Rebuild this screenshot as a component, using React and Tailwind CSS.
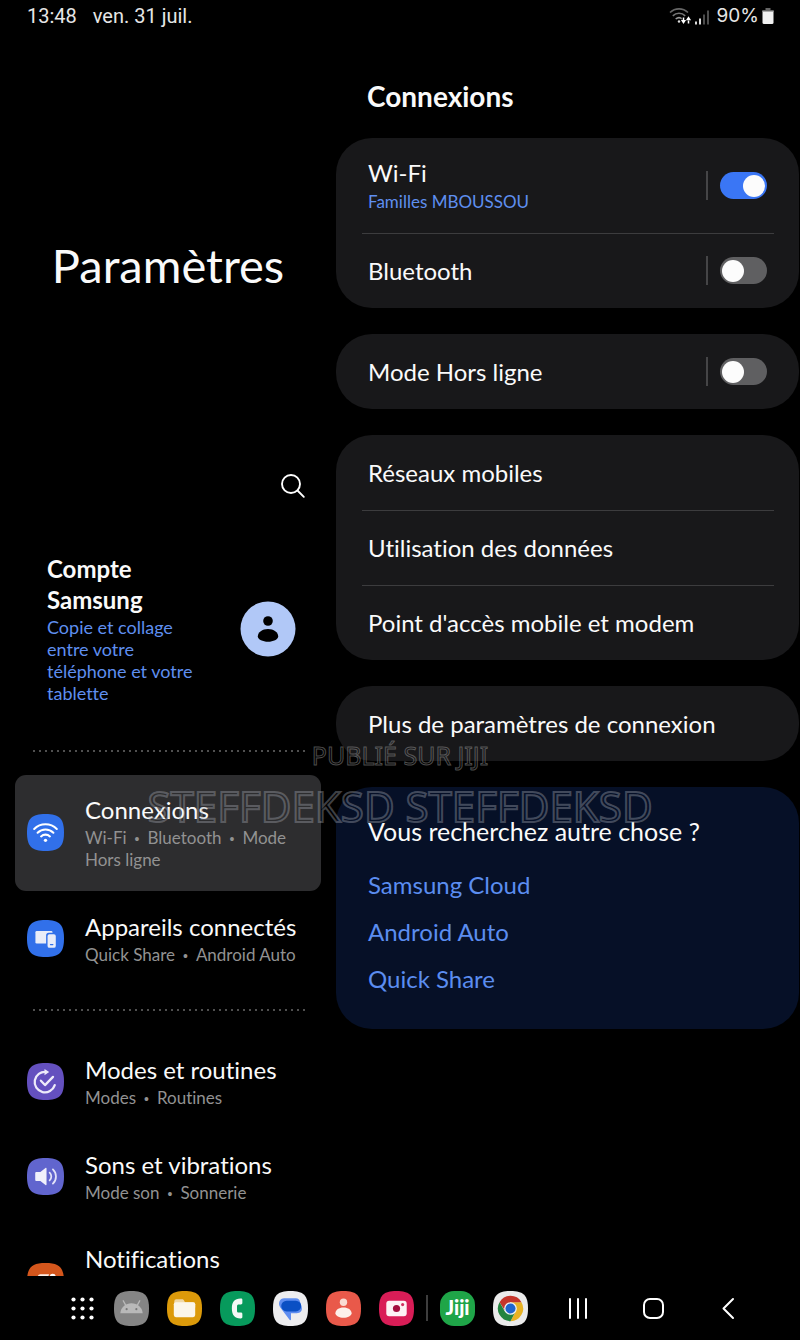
import React from "react";

const SQUIRCLE = "M18 0C31.5 0 36 4.5 36 18S31.5 36 18 36 0 31.5 0 18 4.5 0 18 0Z";

function Tile({ color, className, children }) {
  return (
    <svg viewBox="0 0 36 36" className={`shrink-0 ${className}`} aria-hidden="true">
      <path d={SQUIRCLE} fill={color} />
      {children}
    </svg>
  );
}

const tileSize = "size-[37px]";

const WifiTile = () => (
  <Tile color="#3170ea" className={tileSize}>
    <g fill="none" stroke="#fff" strokeWidth="2" strokeLinecap="round">
      <path d="M7 14.6a15.6 15.6 0 0 1 22 0" />
      <path d="M10.3 18.2a11 11 0 0 1 15.4 0" />
      <path d="M13.7 21.8a6.2 6.2 0 0 1 8.6 0" />
    </g>
    <circle cx="18" cy="25.6" r="1.6" fill="#fff" />
  </Tile>
);

const DevicesTile = () => (
  <Tile color="#3170ea" className={tileSize}>
    <rect x="8.2" y="10.6" width="16.6" height="12.2" rx="1.2" fill="#e9edf8" />
    <rect x="18.6" y="12.4" width="10.4" height="15.8" rx="2.6" fill="#3170ea" />
    <rect x="20" y="13.8" width="8" height="13.2" rx="1.8" fill="#e9edf8" />
    <path d="M22.8 23.9h2.4" stroke="#3170ea" strokeWidth="1.1" strokeLinecap="round" />
  </Tile>
);

const RoutinesTile = () => (
  <Tile color="#6450bf" className={tileSize}>
    <g fill="none" stroke="#eeebfa" strokeWidth="2.2" strokeLinecap="round" strokeLinejoin="round">
      <path d="M27 21.5A10 10 0 1 1 18.6 8.6" />
      <path d="M13.5 17.2l4 4.3 7.8-8" />
    </g>
    <path d="M17 5.8l4.6 3-4.6 3z" fill="#eeebfa" />
  </Tile>
);

const SoundTile = () => (
  <Tile color="#6165ce" className={tileSize}>
    <path d="M8 14.8c0-.7.5-1.200 1.200-1.200H13l5-3.900c.6-.4 1-.1 1 .6v15.400c0 .7-.4 1-1 .6l-5-3.900H9.200C8.500 22.400 8 21.900 8 21.200z" fill="#f0f0fb" />
    <g fill="none" stroke="#e3e3f8" strokeWidth="1.700" strokeLinecap="round">
      <path d="M22 14.200a5.200 5.200 0 0 1 0 7.600" />
      <path d="M25.200 11a9.700 9.700 0 0 1 0 14" />
    </g>
  </Tile>
);

const NotificationsTile = () => (
  <Tile color="#d4561c" className={tileSize}>
    <rect x="10.500" y="11" width="13" height="13" rx="2.500" fill="#fbeee6" />
    <circle cx="25" cy="13.500" r="4.200" fill="#d4561c" />
    <circle cx="25" cy="13.500" r="3" fill="#fff" />
  </Tile>
);

function Dots() {
  return (
    <svg className="my-[23px] ml-[33px] h-0.5 w-[272px] shrink-0" aria-hidden="true">
      <line x1="0" y1="1" x2="272" y2="1" stroke="#505050" strokeWidth="2" strokeDasharray="2 4" />
    </svg>
  );
}

function MenuItem({ icon, title, sub, active, tall }) {
  return (
    <a
      href="#"
      aria-current={active ? "page" : undefined}
      className={`mx-[15px] flex shrink-0 items-center gap-[21px] rounded-[11px] pt-[19px] pr-3 pb-5 pl-3 ${
        active ? "bg-[#2d2d2f]" : ""
      } ${tall ? "min-h-[116px]" : "min-h-[95px]"}`}
    >
      {icon}
      <div className={`min-w-0 flex-1 ${tall ? "self-start" : ""}`}>
        <div className="text-2xl leading-[31px] whitespace-nowrap">{title}</div>
        {sub && (
          <div className="mt-0.5 text-[17px] leading-[22px] text-[#929292]">
            {sub.map((part, i) => (
              <React.Fragment key={part}>
                {i > 0 && <span className="mx-2 font-['Liberation_Sans',sans-serif] text-sm leading-4">•</span>}
                {i > 0 && <wbr />}
                {part}
              </React.Fragment>
            ))}
          </div>
        )}
      </div>
    </a>
  );
}

function Sidebar() {
  return (
    <aside className="flex w-[42%] shrink-0 flex-col overflow-hidden">
      <h1 className="mt-[203px] text-center text-[47px] leading-[60px]">Paramètres</h1>
      <div className="mt-44 flex justify-end pr-7">
        <button type="button" aria-label="Rechercher" className="p-0.5">
          <svg viewBox="0 0 26 26" className="size-[26px]" fill="none" stroke="#fff" strokeWidth="1.900" strokeLinecap="round">
            <circle cx="11" cy="11" r="9" />
            <path d="M17.500 17.500l6.300 6.300" />
          </svg>
        </button>
      </div>
      <a href="#" className="mt-[52px] mb-[23px] flex items-center justify-between pr-10 pl-[47px]">
        <div className="w-[152px]">
          <div className="text-2xl leading-[31px] font-bold">Compte Samsung</div>
          <div className="mt-px text-lg leading-[22px] text-[#5f8ff0]">Copie et collage entre votre téléphone et votre tablette</div>
        </div>
        <svg viewBox="0 0 56 56" className="size-14" aria-hidden="true">
          <circle cx="28" cy="28" r="27.500" fill="#b1c8f7" />
          <circle cx="28" cy="20" r="4.800" fill="#000" />
          <path d="M17.800 35.500c0-4.200 4.500-7.500 10.200-7.500s10.200 3.300 10.200 7.500c0 2.800-5 5.300-10.200 5.300s-10.200-2.500-10.200-5.300z" fill="#000" />
        </svg>
      </a>
      <Dots />
      <nav className="flex flex-col">
        <MenuItem active icon={<WifiTile />} title="Connexions" sub={["Wi-Fi", "Bluetooth", "Mode Hors ligne"]} />
        <MenuItem icon={<DevicesTile />} title="Appareils connectés" sub={["Quick Share", "Android Auto"]} />
        <Dots />
        <MenuItem icon={<RoutinesTile />} title="Modes et routines" sub={["Modes", "Routines"]} />
        <MenuItem icon={<SoundTile />} title="Sons et vibrations" sub={["Mode son", "Sonnerie"]} />
        <MenuItem tall icon={<NotificationsTile />} title="Notifications" />
      </nav>
    </aside>
  );
}

function Card({ children }) {
  return <section className="rounded-[36px] bg-[#18181a]">{children}</section>;
}

const Rule = () => <hr className="mr-[25px] -mb-px ml-[26px] border-t border-[#3c3c3e]" />;

function ToggleRow({ id, label, sub, on }) {
  return (
    <div className={`flex items-center pr-8 pl-8 ${sub ? "h-[95px]" : "h-[75px]"}`}>
      <label htmlFor={id} className="flex-1">
        <span className="block text-2xl leading-[31px]">{label}</span>
        {sub && <span className="mt-0.5 block text-[17px] leading-6 text-[#5f8ff0]">{sub}</span>}
      </label>
      <span className="mr-3 h-[29px] w-0.5 bg-[#454547]" />
      <input
        id={id}
        type="checkbox"
        role="switch"
        defaultChecked={on}
        className="flex h-[27px] w-[47px] appearance-none items-center rounded-full bg-[#5f5f61] px-0.5 before:size-[22px] before:rounded-full before:bg-[#fcfcfc] checked:justify-end checked:bg-[#3a76f5]"
      />
    </div>
  );
}

function LinkRow({ label }) {
  return (
    <a href="#" className="flex h-[75px] items-center px-8 text-2xl leading-[31px]">
      {label}
    </a>
  );
}

function Detail() {
  return (
    <main className="min-w-0 flex-1 pr-px">
      <h2 className="mt-11 mb-[22px] ml-[31px] text-[28px] leading-10 font-bold">Connexions</h2>
      <div className="flex flex-col gap-[26px]">
        <Card>
          <ToggleRow id="wifi" label="Wi-Fi" sub="Familles MBOUSSOU" on />
          <Rule />
          <ToggleRow id="bluetooth" label="Bluetooth" />
        </Card>
        <Card>
          <ToggleRow id="offline" label="Mode Hors ligne" />
        </Card>
        <Card>
          <LinkRow label="Réseaux mobiles" />
          <Rule />
          <LinkRow label="Utilisation des données" />
          <Rule />
          <LinkRow label="Point d'accès mobile et modem" />
        </Card>
        <Card>
          <LinkRow label="Plus de paramètres de connexion" />
        </Card>
        <section className="rounded-[36px] bg-[#061027] px-8 pt-[29px] pb-[27px]">
          <h3 className="mb-[14px] text-[25px] leading-[31px]">Vous recherchez autre chose ?</h3>
          <div className="flex flex-col text-2xl leading-[47px] text-[#5b8df0]">
            <a href="#">Samsung Cloud</a>
            <a href="#">Android Auto</a>
            <a href="#">Quick Share</a>
          </div>
        </section>
      </div>
    </main>
  );
}

function StatusBar() {
  return (
    <header className="flex h-8 shrink-0 items-center pr-[26px] pl-[27px] font-['Roboto',sans-serif] text-xl leading-8 text-[#e6e6e6]">
      <span>13:48</span>
      <span className="ml-4">ven. 31 juil.</span>
      <svg viewBox="0 0 42 20" className="mr-[6px] ml-auto h-5 w-[42px]" aria-hidden="true">
        <g fill="none" strokeWidth="1.600">
          <path d="M1 6.500a13 13 0 0 1 18 0" stroke="#666" />
          <path d="M3.800 9.800a9 9 0 0 1 12.400 0" stroke="#777" />
          <path d="M6.700 13a5 5 0 0 1 6.600 0" stroke="#999" />
        </g>
        <circle cx="10" cy="15.500" r="1.200" fill="#ddd" />
        <g fill="none" stroke="#000" strokeWidth="3.500">
          <path d="M14.500 11v6.500M19.500 17.500v-7" />
        </g>
        <path d="M14.500 11.500v3M19.500 17.500v-3" stroke="#fff" strokeWidth="1.500" />
        <path d="M11.900 14h5.200l-2.600 4zM16.900 14.200h5.200l-2.600-4z" fill="#fff" />
        <path d="M27 15.500v3M31 12.500v6" stroke="#f2f2f2" strokeWidth="1.800" />
        <path d="M35 8.500v10M39 4.500v14" stroke="#555" strokeWidth="1.800" />
      </svg>
      <span className="font-['Inter',sans-serif] text-[19px] leading-8">90%</span>
      <svg viewBox="0 0 12 18" className="ml-[3px] h-[18px] w-3" aria-hidden="true">
        <path d="M3.500 1h5v2H11a1 1 0 0 1 1 1v1H0V4a1 1 0 0 1 1-1h2.500z" fill="#666" />
        <path d="M.500 4.500h11V15.500a1.500 1.500 0 0 1-1.500 1.500H2a1.500 1.500 0 0 1-1.500-1.500z" fill="#f0f0f0" />
      </svg>
    </header>
  );
}

function AppButton({ label, color, children }) {
  return (
    <button type="button" aria-label={label}>
      <Tile color={color} className="size-[35px]">{children}</Tile>
    </button>
  );
}

function TaskBar() {
  return (
    <footer className="flex h-16 shrink-0 items-center pl-[71px]">
      <button type="button" aria-label="Applications" className="mr-5">
        <svg viewBox="0 0 23 23" className="size-[23px]" fill="#fff">
          {[2.500, 11.500, 20.500].map((y) => [2.500, 11.500, 20.500].map((x) => <circle key={`${x}-${y}`} cx={x} cy={y} r="2.100" />))}
        </svg>
      </button>
      <div className="flex gap-[18px]">
        <AppButton label="Android" color="#858585">
          <path d="M6.500 23c.5-6.300 5.500-10.300 11.500-10.300S29 16.700 29.500 23z" fill="#b9b9b9" />
          <path d="M12 14.500l-2.500-4.500M24 14.500l2.500-4.500" stroke="#b9b9b9" strokeWidth="1.400" strokeLinecap="round" />
          <circle cx="13" cy="18.700" r="1.100" fill="#777" />
          <circle cx="23" cy="18.700" r="1.100" fill="#777" />
        </AppButton>
        <AppButton label="Mes fichiers" color="#dc9a0a">
          <path d="M7.500 10.500a2 2 0 0 1 2-2h6c1 0 1.500.5 2 1.300l1 1.700h8.500a2 2 0 0 1 2 2V17h-21.500z" fill="#f0d9a8" />
          <rect x="7" y="11.500" width="22" height="15.500" rx="2.200" fill="#fbf6ea" />
        </AppButton>
        <AppButton label="Téléphone" color="#079a5c">
          <path d="M21 7.800c1.500-.1 2 .4 2 1.400v3c0 1.100-.5 1.600-1.600 1.600h-2.200c-1 0-1.700.6-1.700 1.700v5c0 1.100.7 1.700 1.700 1.700h2.200c1.100 0 1.600.5 1.600 1.600v3c0 1-.5 1.500-2 1.400-6-.2-8.800-3.400-8.800-10.200s2.800-10 8.800-10.200z" fill="#f4f8f6" />
        </AppButton>
        <AppButton label="Messages" color="#ededef">
          <path d="M11.500 7.500h12c2.500 0 3.800 1.500 4.300 3.500l1.700 5.500c1 4-1.500 6.300-5 6.300h-6v6.400c0 .9-.8 1.100-1.500.4L7.500 17C4.500 12.500 7 7.500 11.500 7.500z" fill="#5e8df0" />
          <rect x="8.500" y="10" width="20.500" height="11" rx="5.500" fill="#0b50c4" />
        </AppButton>
        <AppButton label="Contacts" color="#e9594a">
          <circle cx="18" cy="11.500" r="3.800" fill="#f9dcd3" />
          <path d="M9.700 22.800c0-3.300 3.600-5.800 8.300-5.800s8.300 2.500 8.300 5.800c0 2.700-4 4.700-8.300 4.700s-8.300-2-8.300-4.700z" fill="#fdf0ea" />
        </AppButton>
        <AppButton label="Appareil photo" color="#d91d57">
          <rect x="7.500" y="10" width="21" height="16" rx="3" fill="#fdf3f5" />
          <circle cx="18" cy="18" r="3.700" fill="#a30f3e" />
          <circle cx="24.300" cy="14" r="1.600" fill="#d0305f" />
        </AppButton>
      </div>
      <span className="mx-3 h-[26px] w-0.5 bg-[#3e3e3e]" />
      <div className="flex gap-[18px]">
        <button type="button" className="flex size-[35px] items-center justify-center rounded-[14px] bg-[#1fa548] pb-0.5 font-['Lato',sans-serif] text-xl leading-5 font-black text-white">
          Jiji
        </button>
        <AppButton label="Chrome" color="#ebebeb">
          <path d="M29.260 11.500A13 13 0 0 1 18 31L23.400 21 23.200 15 18 11.500z" fill="#e8b224" />
          <path d="M6.740 11.500A13 13 0 0 1 29.260 11.500H18L12.800 21z" fill="#c5352b" />
          <path d="M6.740 11.500L12.400 21.300 18 24l5.200-3L18 31A13 13 0 0 1 6.740 11.500z" fill="#23843f" />
          <circle cx="18" cy="18" r="6.500" fill="#f2f2f2" />
          <circle cx="18" cy="18" r="5.200" fill="#1f66cf" />
        </AppButton>
      </div>
      <div className="ml-[38px] flex items-center gap-[51px]">
        <button type="button" aria-label="Récents">
          <svg viewBox="0 0 24 24" className="size-6" stroke="#fff" strokeWidth="2" strokeLinecap="round">
            <path d="M4 3v19M12 3v19M20 3v19" />
          </svg>
        </button>
        <button type="button" aria-label="Accueil">
          <svg viewBox="0 0 24 24" className="size-6" fill="none" stroke="#fff" strokeWidth="2">
            <rect x="3" y="3" width="19" height="19" rx="6" />
          </svg>
        </button>
        <button type="button" aria-label="Retour">
          <svg viewBox="0 0 24 24" className="size-6" fill="none" stroke="#fff" strokeWidth="2" strokeLinecap="round" strokeLinejoin="round">
            <path d="M17 3L7.500 12.500l9.500 9.500" />
          </svg>
        </button>
      </div>
    </footer>
  );
}

function Watermark() {
  return (
    <div className="pointer-events-none absolute inset-x-0 top-[738px] text-center font-['Noto_Sans',sans-serif] text-transparent">
      <div className="text-[25px] leading-[34px] [-webkit-text-stroke:1px_rgba(150,150,150,0.5)]">PUBLIÉ SUR JIJI</div>
      <div className="text-[42px] leading-[68px] [-webkit-text-stroke:2px_rgba(165,170,180,0.38)]">STEFFDEKSD STEFFDEKSD</div>
    </div>
  );
}

export default function App() {
  return (
    <div className="relative flex h-screen flex-col overflow-hidden bg-black font-['Lato',sans-serif] text-[#fafafa] [font-variant-ligatures:none]">
      <StatusBar />
      <div className="flex min-h-0 flex-1">
        <Sidebar />
        <Detail />
      </div>
      <TaskBar />
      <Watermark />
    </div>
  );
}
